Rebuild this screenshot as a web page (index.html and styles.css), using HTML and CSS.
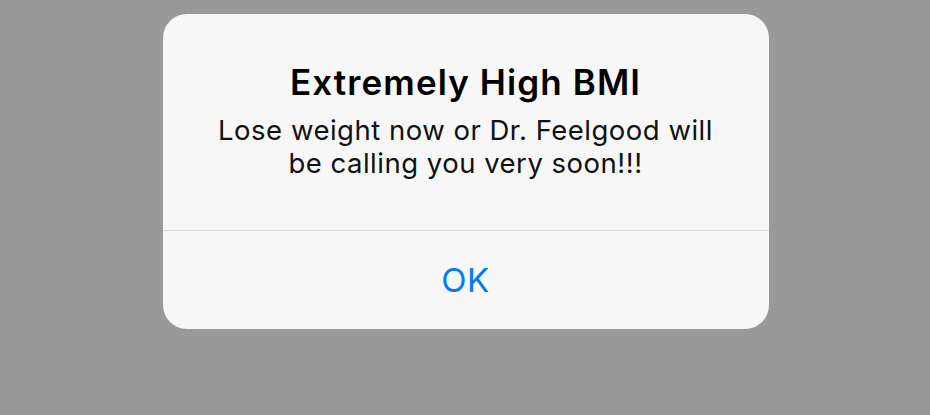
FILE: index.html
```html
<!DOCTYPE html>
<html>
<head>
<meta charset="utf-8">
<link rel="stylesheet" href="styles.css">
</head>
<body>
<div class="alert">
  <div class="content">
    <h1 class="title">Extremely High BMI</h1>
    <p class="message">Lose weight now or Dr. Feelgood will<br>be calling you very soon!!!</p>
  </div>
  <button class="action">OK</button>
</div>
</body>
</html>
```
FILE: styles.css
```css
html, body {
  margin: 0;
  padding: 0;
  width: 930px;
  height: 415px;
  background: #999999;
  overflow: hidden;
}
body {
  display: flex;
  justify-content: center;
  padding-top: 14px;
  box-sizing: border-box;
  font-family: Inter, "Liberation Sans", sans-serif;
}
.alert {
  width: 606px;
  height: 315px;
  margin-left: 1px;
  background: #f7f7f7;
  border-radius: 24px;
  display: flex;
  flex-direction: column;
  overflow: hidden;
}
.content {
  height: 217px;
  border-bottom: 1px solid #dcdcdc;
  display: flex;
  flex-direction: column;
  align-items: center;
  padding-top: 48px;
  box-sizing: border-box;
}
.title {
  margin: 0;
  font-size: 35px;
  font-weight: 600;
  line-height: 40px;
  color: #000;
  letter-spacing: 1.1px;
}
.message {
  margin: 12px 0 0;
  font-size: 27.5px;
  line-height: 33px;
  color: #111;
  text-align: center;
  letter-spacing: 0.5px;
}
.action {
  flex: 1;
  border: 0;
  background: transparent;
  font-family: inherit;
  font-size: 33px;
  color: #007aff;
  padding: 0;
  letter-spacing: 0.5px;
}
```
